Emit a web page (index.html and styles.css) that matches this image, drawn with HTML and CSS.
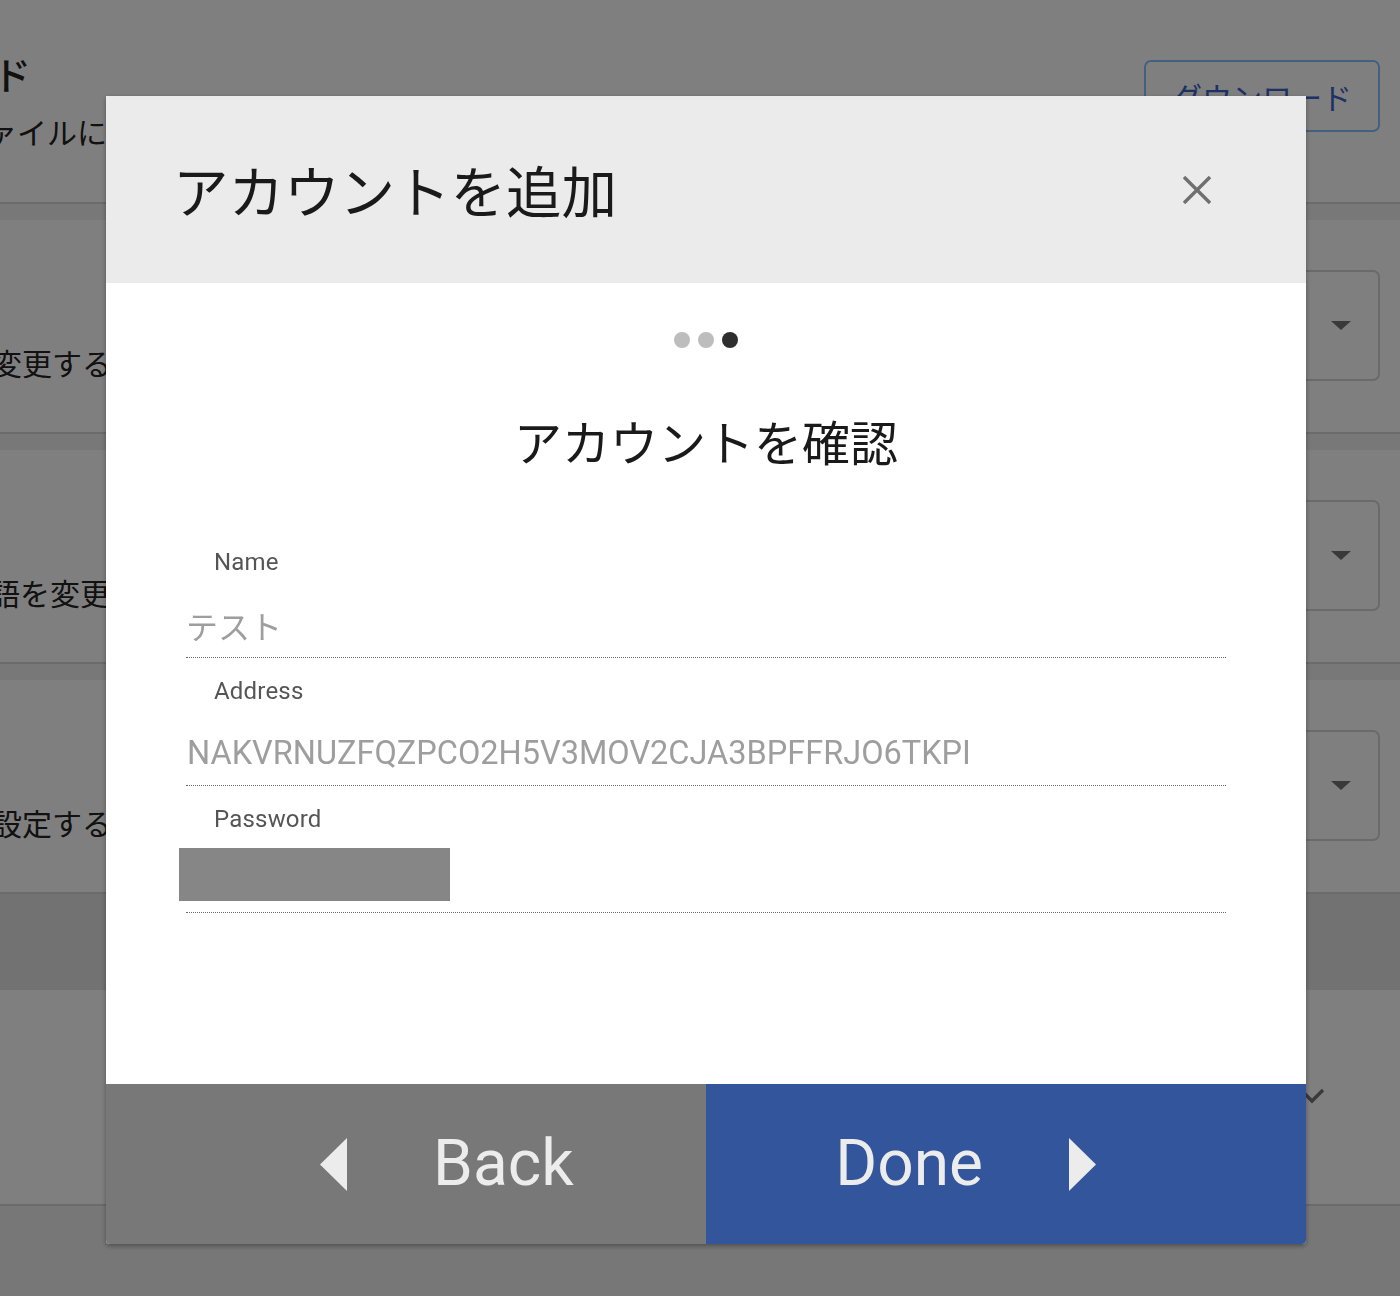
FILE: index.html
```html
<!DOCTYPE html>
<html lang="ja">
<head>
<meta charset="utf-8">
<title>アカウントを追加</title>
<link rel="stylesheet" href="styles.css">
</head>
<body>
<div class="page">
  <section class="block block-top">
    <div class="top-text">
      <h1 class="top-title">ダウンロード</h1>
      <p class="top-desc">ファイルにダウンロードします</p>
    </div>
    <button class="outline-btn">ダウンロード</button>
  </section>
  <div class="gap"></div>
  <section class="block row">
    <div class="row-label row-label-1">テーマを変更する</div>
    <div class="select"><span class="caret"></span></div>
  </section>
  <div class="gap"></div>
  <section class="block row">
    <div class="row-label row-label-2">言語を変更する</div>
    <div class="select"><span class="caret"></span></div>
  </section>
  <div class="gap"></div>
  <section class="block row">
    <div class="row-label row-label-3">パスワードを設定する</div>
    <div class="select"><span class="caret"></span></div>
  </section>
  <div class="band"></div>
  <section class="block row-check">
    <svg class="chevron" width="26" height="16" viewBox="0 0 26 16"><polyline points="2,2 13,13 24,2" fill="none" stroke="#747474" stroke-width="3.4"/></svg>
  </section>
</div>

<div class="overlay">
  <div class="modal">
    <header class="modal-header">
      <h2 class="modal-title">アカウントを追加</h2>
      <button class="close-btn" aria-label="close">
        <svg width="28" height="28" viewBox="0 0 28 28"><path d="M1 1 L27 27 M27 1 L1 27" stroke="#6f6f6f" stroke-width="3.4"/></svg>
      </button>
    </header>
    <div class="modal-body">
      <div class="steps">
        <span class="dot"></span><span class="dot"></span><span class="dot dot-active"></span>
      </div>
      <h3 class="step-title">アカウントを確認</h3>
      <div class="fields">
        <div class="field">
          <div class="field-label">Name</div>
          <div class="field-value field-value-ja">テスト</div>
        </div>
        <div class="field">
          <div class="field-label">Address</div>
          <div class="field-value">NAKVRNUZFQZPCO2H5V3MOV2CJA3BPFFRJO6TKPI</div>
        </div>
        <div class="field field-password">
          <div class="field-label">Password</div>
          <div class="redacted"></div>
        </div>
      </div>
    </div>
    <footer class="modal-footer">
      <button class="nav-btn nav-back">
        <svg width="27" height="53" viewBox="0 0 27 53"><polygon points="27,0 27,53 0,26.5" fill="#ececec"/></svg>
        <span class="nav-text">Back</span>
      </button>
      <button class="nav-btn nav-done">
        <span class="nav-text">Done</span>
        <svg width="27" height="53" viewBox="0 0 27 53"><polygon points="0,0 27,26.5 0,53" fill="#ececec"/></svg>
      </button>
    </footer>
  </div>
</div>
</body>
</html>
```

FILE: styles.css
```css
html, body {
  margin: 0;
  padding: 0;
}
body {
  width: 1400px;
  height: 1296px;
  overflow: hidden;
  background: #eeeeee;
  font-family: "Noto Sans CJK JP", "Roboto", sans-serif;
  color: #222;
}
.page {
  display: flex;
  flex-direction: column;
}
.block {
  background: #ffffff;
  border-bottom: 2px solid #d6d6d6;
  box-sizing: border-box;
}
.gap {
  height: 16px;
  background: #f0f0f0;
}
.band {
  height: 96px;
  background: #e4e4e4;
}
.block-top {
  height: 204px;
  display: flex;
  justify-content: space-between;
  align-items: flex-start;
  padding-right: 20px;
}
.top-text {
  white-space: nowrap;
  overflow: hidden;
}
.top-title {
  margin: 48px 0 0 -197px;
  font-size: 38px;
  line-height: 50px;
  font-weight: 500;
}
.top-desc {
  margin: 12px 0 0 -43px;
  font-size: 30px;
  line-height: 42px;
}
.outline-btn {
  margin-top: 60px;
  width: 236px;
  height: 72px;
  border: 2px solid #88c0ff;
  border-radius: 7px;
  background: #ffffff;
  color: #3a64c8;
  font-family: "Noto Sans CJK JP", sans-serif;
  font-size: 30px;
}
.row {
  height: 214px;
  display: flex;
  justify-content: space-between;
  align-items: flex-start;
  padding: 50px 20px 0 0;
}
.row-label {
  white-space: nowrap;
  font-size: 30px;
  line-height: 42px;
  margin-top: 71px;
}
.row-label-1 { margin-left: -128px; }
.row-label-2 { margin-left: -40px; }
.row-label-3 { margin-left: -188px; }
.select {
  width: 300px;
  height: 111px;
  box-sizing: border-box;
  border: 2px solid #d4d4d4;
  border-radius: 7px;
  display: flex;
  align-items: center;
  justify-content: flex-end;
  padding-right: 27px;
}
.caret {
  width: 0;
  height: 0;
  border-left: 10px solid transparent;
  border-right: 10px solid transparent;
  border-top: 9px solid #747474;
}
.row-check {
  height: 216px;
  display: flex;
  justify-content: flex-end;
  align-items: flex-start;
  padding: 98px 75px 0 0;
}

/* overlay + modal */
.overlay {
  position: fixed;
  inset: 0;
  background: rgba(0, 0, 0, 0.5);
  display: flex;
  justify-content: center;
  align-items: flex-start;
  padding: 96px 0 0 12px;
}
.modal {
  width: 1200px;
  display: flex;
  flex-direction: column;
  background: #fff;
  border-radius: 0 0 4px 4px;
  overflow: hidden;
  box-shadow: 0 2px 5px rgba(0, 0, 0, 0.35);
}
.modal-header {
  height: 187px;
  background: #ebebeb;
  display: flex;
  align-items: center;
  justify-content: space-between;
  padding: 0 95px 0 67px;
  box-sizing: border-box;
}
.modal-title {
  margin: 0;
  font-size: 55.5px;
  font-weight: 400;
  line-height: 1;
  color: #1a1a1a;
}
.close-btn {
  border: 0;
  background: transparent;
  padding: 0;
  width: 28px;
  height: 28px;
  display: flex;
}
.modal-body {
  height: 801px;
  padding: 49px 80px 0;
  box-sizing: border-box;
  display: flex;
  flex-direction: column;
  align-items: stretch;
}
.steps {
  display: flex;
  justify-content: center;
  gap: 8px;
}
.dot {
  width: 16px;
  height: 16px;
  border-radius: 50%;
  background: #bdbdbd;
}
.dot-active {
  background: #2e2e2e;
}
.step-title {
  margin: 59px 0 0;
  text-align: center;
  font-size: 48px;
  line-height: 66px;
  font-weight: 400;
  color: #1a1a1a;
}
.fields {
  margin-top: 74px;
  display: flex;
  flex-direction: column;
  gap: 18px;
}
.field {
  border-bottom: 1px dotted #6a6a6a;
  padding-bottom: 10px;
}
.field-label {
  font-family: "Roboto", sans-serif;
  font-size: 24px;
  letter-spacing: 0.2px;
  line-height: 30px;
  color: #555;
  padding-left: 28px;
}
.field-value {
  margin-top: 25px;
  font-family: "Roboto", "Noto Sans CJK JP", sans-serif;
  font-size: 32.5px;
  line-height: 44px;
  color: #9e9e9e;
  padding-left: 1px;
}
.field-value-ja {
  font-family: "Noto Sans CJK JP", sans-serif;
  font-size: 32px;
  padding-left: 0;
  margin-top: 26px;
}
.field-password {
  padding-bottom: 11px;
}
.redacted {
  margin: 14px 0 0 -7px;
  width: 271px;
  height: 53px;
  background: #868686;
}
.modal-footer {
  height: 160px;
  display: flex;
}
.nav-btn {
  flex: none;
  width: 600px;
  box-sizing: border-box;
  border: 0;
  display: flex;
  align-items: center;
  gap: 86px;
  color: #ececec;
  font-family: "Roboto", sans-serif;
  padding: 0;
}
.nav-back {
  background: #787878;
  justify-content: flex-start;
  padding-left: 214px;
}
.nav-done {
  background: #33559b;
  justify-content: flex-end;
  padding-right: 210px;
}
.nav-text {
  font-size: 64px;
  line-height: 1;
}
```
